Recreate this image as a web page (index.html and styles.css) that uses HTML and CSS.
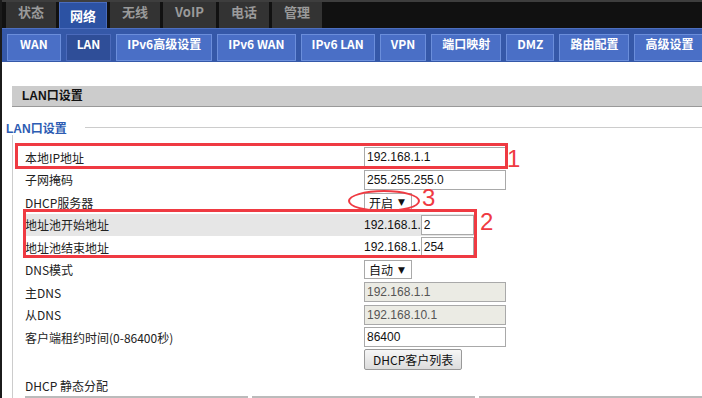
FILE: index.html
```html
<!DOCTYPE html>
<html lang="zh-CN">
<head>
    <meta charset="UTF-8">
    <title>LAN口设置</title>
    <link rel="stylesheet" href="styles.css">
</head>
<body>
<div class="page">
    <div class="topnav">
        <a href="#">状态</a>
        <a href="#" class="active">网络</a>
        <a href="#">无线</a>
        <a href="#">VoIP</a>
        <a href="#">电话</a>
        <a href="#">管理</a>
    </div>
    <div class="subnav">
        <a href="#">WAN</a>
        <a href="#" class="active">LAN</a>
        <a href="#">IPv6高级设置</a>
        <a href="#">IPv6 WAN</a>
        <a href="#">IPv6 LAN</a>
        <a href="#">VPN</a>
        <a href="#">端口映射</a>
        <a href="#">DMZ</a>
        <a href="#">路由配置</a>
        <a href="#">高级设置</a>
    </div>

    <div class="content">
        <div class="section-title">LAN口设置</div>
        <div class="group">
            <div class="legend"><span>LAN口设置</span><i class="rule"></i></div>
            <div class="group-body">
                <div class="row">
                    <div class="label">本地IP地址</div>
                    <input class="field" type="text" value="192.168.1.1">
                </div>
                <div class="row">
                    <div class="label">子网掩码</div>
                    <input class="field" type="text" value="255.255.255.0">
                </div>
                <div class="row">
                    <div class="label">DHCP服务器</div>
                    <div class="select">开启 <span class="arrow">▼</span></div>
                </div>
                <div class="row hl">
                    <div class="label">地址池开始地址</div>
                    <span class="prefix">192.168.1.</span><input class="field short" type="text" value="2">
                </div>
                <div class="row">
                    <div class="label">地址池结束地址</div>
                    <span class="prefix">192.168.1.</span><input class="field short" type="text" value="254">
                </div>
                <div class="row">
                    <div class="label">DNS模式</div>
                    <div class="select">自动 <span class="arrow">▼</span></div>
                </div>
                <div class="row">
                    <div class="label">主DNS</div>
                    <input class="field off" type="text" value="192.168.1.1" disabled>
                </div>
                <div class="row">
                    <div class="label">从DNS</div>
                    <input class="field off" type="text" value="192.168.10.1" disabled>
                </div>
                <div class="row">
                    <div class="label">客户端租约时间(0-86400秒)</div>
                    <input class="field" type="text" value="86400">
                </div>
                <div class="row">
                    <div class="label"></div>
                    <button class="btn">DHCP客户列表</button>
                </div>

                <div class="static">DHCP 静态分配</div>
                <div class="thead">
                    <div class="th"></div>
                    <div class="th"></div>
                    <div class="th"></div>
                </div>
            </div>
        </div>
    </div>

    <!-- annotations drawn over the screenshot -->
    <div class="mark box1"></div>
    <div class="mark box2"></div>
    <div class="mark oval"></div>
    <div class="num num1">1</div>
    <div class="num num2">2</div>
    <div class="num num3">3</div>
</div>
</body>
</html>
```

FILE: styles.css
```css
* {
    box-sizing: border-box;
}
body {
    margin: 0;
    padding: 0;
    font-family: "Noto Sans CJK SC", sans-serif;
    font-size: 12px;
    color: #222;
    background: #fff;
    height: 398px;
    overflow: hidden;
}
.page {
    position: relative;
    border-left: 2px solid #1b1b1b;
    height: 398px;
    overflow: hidden;
}
.topnav {
    height: 28px;
    background: #111;
    border-top: 2px solid #3e3e3e;
    display: flex;
    gap: 3px;
    padding-left: 4px;
}
.topnav a {
    display: block;
    height: 26px;
    line-height: 26px;
    padding: 0 12px;
    background: #333;
    color: #9a9a9a;
    font: bold 13px "Noto Sans CJK SC", sans-serif;
    text-decoration: none;
}
.topnav a.active {
    background: #2c52a3;
    color: #fff;
    border: 1px solid #4a6cbd;
    border-bottom: none;
    line-height: 25px;
    padding: 0 10px;
}
.subnav {
    height: 34px;
    background: #3558a8;
    border-top: 1px solid #4d6fc0;
    padding: 5px 0 0 5px;
    display: flex;
    gap: 5px;
}
.subnav a {
    display: block;
    height: 27px;
    line-height: 25px;
    padding: 0 10px;
    background: #4a6fc6;
    border: 1px solid #6b8edb;
    color: #fff;
    font: bold 12px "Noto Sans CJK SC", sans-serif;
    text-decoration: none;
    white-space: nowrap;
}
.subnav a:first-child {
    padding: 0 12px;
}
.subnav a.active {
    background: #2f4e98;
    border-color: #4b6abb;
}
.content {
    padding: 24px 0 0 10px;
}
.section-title {
    height: 21px;
    background: #ccc;
    border-bottom: 1px solid #999;
    padding-left: 10px;
    font: bold 12px/20px "Liberation Sans", "Noto Sans CJK SC", sans-serif;
    color: #111;
}
.group {
    margin-top: 12px;
}
.legend {
    display: flex;
    align-items: center;
    height: 16px;
    margin-left: -6px;
}
.legend span {
    color: #2d5cb3;
    font: bold 12px "Liberation Sans", "Noto Sans CJK SC", sans-serif;
}
.legend .rule {
    flex: 1;
    height: 1px;
    background: #ccc;
    margin-left: 18px;
}
.group-body {
    border-left: 1px solid #ccc;
    padding: 11px 0 0 12px;
    height: 270px;
}
.row {
    display: flex;
    align-items: center;
    height: 22.5px;
    width: 450px;
}
.row.hl {
    background: #e6e6e6;
}
.label {
    width: 339px;
    flex-shrink: 0;
}
.field {
    flex-shrink: 0;
    width: 142px;
    height: 20px;
    margin: 0;
    padding: 0 2px;
    border: 1px solid #a9a9a9;
    border-radius: 0;
    background: #fff;
    color: #111;
    font: 12px "Liberation Sans", sans-serif;
    outline: none;
}
.field.short {
    width: 53px;
}
.field.off {
    background: #ebebe4;
    color: #555;
}
.prefix {
    font: 12px "Liberation Sans", sans-serif;
    color: #111;
}
.select {
    display: flex;
    align-items: center;
    gap: 5px;
    width: 48px;
    height: 19px;
    border: 1px solid #a9a9a9;
    background: #fff;
    padding-left: 4px;
    color: #111;
}
.select .arrow {
    font-size: 9px;
    font-family: "DejaVu Sans", sans-serif;
}
.btn {
    height: 21px;
    padding: 0 8px;
    border: 1px solid #999;
    border-radius: 2px;
    background: linear-gradient(#f6f6f6, #dcdcdc);
    font: 12px "Noto Sans CJK SC", sans-serif;
    color: #111;
}
.static {
    margin-top: 7px;
    line-height: 16px;
}
.thead {
    display: flex;
    gap: 4px;
    margin-top: 2px;
}
.th {
    width: 223px;
    height: 4px;
    border-top: 2px solid #bbb;
    background: #f2f2f2;
}
.mark {
    position: absolute;
    border: 3px solid #ef3a42;
}
.box1 {
    left: 13px;
    top: 143px;
    width: 493px;
    height: 26px;
}
.box2 {
    left: 21px;
    top: 209px;
    width: 454px;
    height: 49px;
}
.oval {
    left: 346px;
    top: 190px;
    width: 72px;
    height: 22px;
    border-width: 2.5px;
    border-radius: 50%;
}
.num {
    position: absolute;
    color: #ef3a42;
    font: 24px/1 "Liberation Sans", sans-serif;
}
.num1 {
    left: 505px;
    top: 147px;
}
.num2 {
    left: 478px;
    top: 210px;
}
.num3 {
    left: 420px;
    top: 186px;
}
```
